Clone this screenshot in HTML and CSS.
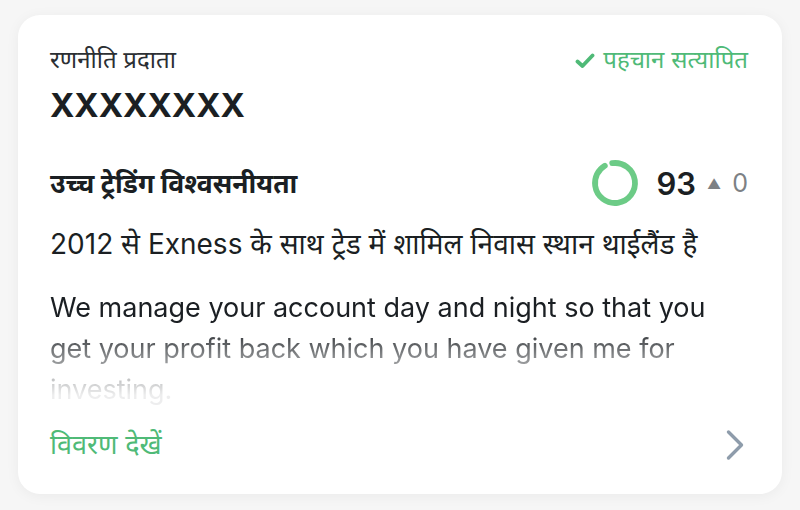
FILE: index.html
```html
<!DOCTYPE html>
<html lang="hi">

<head>
    <meta charset="UTF-8">
    <meta name="viewport" content="width=device-width, initial-scale=1.0">
    <title>रणनीति प्रदाता</title>
    <link rel="stylesheet" href="styles.css">
</head>

<body>
    <section class="card">
        <div class="card-head">
            <div>
                <div class="label">रणनीति प्रदाता</div>
                <h2 class="name">XXXXXXXX</h2>
            </div>
            <div class="verified">
                <svg class="check" viewBox="0 0 20 16" width="20" height="16">
                    <path d="M2.5 8.5 L7.5 13 L17.5 2.5" fill="none" stroke="currentColor" stroke-width="3.8" stroke-linecap="round" stroke-linejoin="round" />
                </svg>
                <span>पहचान सत्यापित</span>
            </div>
        </div>

        <div class="trust">
            <strong class="trust-title">उच्च ट्रेडिंग विश्वसनीयता</strong>
            <div class="score">
                <svg class="ring" viewBox="0 0 48 48" width="48" height="48">
                    <circle cx="24" cy="24" r="20" fill="none" stroke="#6ccb86" stroke-width="5.8" stroke-linecap="round"
                        stroke-dasharray="117 125.7" transform="rotate(-98 24 24)" />
                </svg>
                <span class="score-value">93</span>
                <span class="score-arrow">▲</span>
                <span class="score-change">0</span>
            </div>
        </div>

        <p class="location">2012 से Exness के साथ ट्रेड में शामिल निवास स्थान थाईलैंड है</p>

        <p class="about">We manage your account day and night so that you get your profit back which you have given me for investing.</p>

        <div class="card-foot">
            <a class="details" href="#">विवरण देखें</a>
            <svg class="chevron" viewBox="0 0 20 32" width="20" height="32">
                <path d="M3.5 3 L16.5 16 L3.5 29" fill="none" stroke="currentColor" stroke-width="3.4" stroke-linecap="round" stroke-linejoin="round" />
            </svg>
        </div>
    </section>
</body>

</html>
```

FILE: styles.css
```css
body {
    margin: 0;
    background: #f6f6f6;
    font-family: Inter, "Noto Sans", "Noto Sans Devanagari", sans-serif;
    color: #1b1f23;
}

.card {
    box-sizing: border-box;
    width: 764px;
    height: 479px;
    margin: 15px 18px;
    padding: 30px 34px 0 32px;
    background: #fff;
    border-radius: 22px;
    box-shadow: 0 2px 14px rgba(0, 0, 0, 0.05);
}

.card-head {
    display: flex;
    justify-content: space-between;
    align-items: flex-start;
}

.label {
    font-size: 24px;
    line-height: 30px;
    color: #2b2f33;
}

.name {
    margin: 8px 0 0;
    font-size: 33px;
    line-height: 44px;
    font-weight: 700;
}

.verified {
    display: flex;
    align-items: center;
    gap: 8px;
    color: #4fba77;
    font-size: 24px;
    line-height: 30px;
}

.check {
    margin-top: 2px;
}

.trust {
    display: flex;
    justify-content: space-between;
    align-items: center;
    margin-top: 32px;
}

.trust-title {
    font-size: 26.5px;
    font-weight: 700;
}

.score {
    display: flex;
    align-items: center;
}

.ring {
    margin-right: 18px;
}

.score-value {
    font-size: 31px;
    font-weight: 600;
    margin-right: 11px;
}

.score-arrow {
    font-size: 14px;
    color: #7d8185;
    margin-right: 11px;
}

.score-change {
    font-size: 25px;
    color: #7d8185;
}

.location {
    margin: 19px 0 0;
    font-size: 28px;
    line-height: 36px;
}

.about {
    margin: 25px 0 0;
    height: 123px;
    overflow: hidden;
    font-size: 27px;
    line-height: 41px;
    -webkit-mask-image: linear-gradient(to bottom, #000 32%, rgba(0, 0, 0, 0.55) 55%, rgba(0, 0, 0, 0.08) 88%);
    mask-image: linear-gradient(to bottom, #000 32%, rgba(0, 0, 0, 0.55) 55%, rgba(0, 0, 0, 0.08) 88%);
}

.card-foot {
    display: flex;
    justify-content: space-between;
    align-items: center;
    margin-top: 17px;
}

.details {
    color: #4fba77;
    font-size: 27px;
    line-height: 36px;
    text-decoration: none;
}

.chevron {
    color: #8e9cab;
    margin-right: 3px;
}
```
